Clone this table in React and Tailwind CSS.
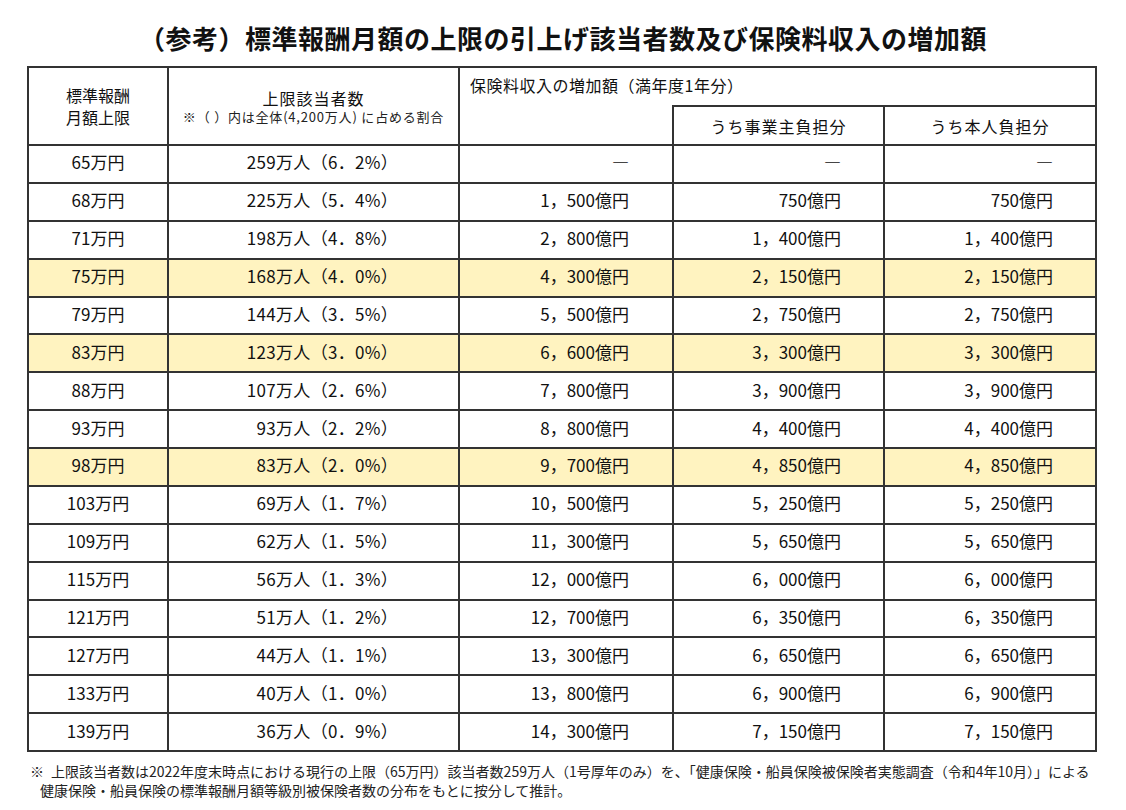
import React from 'react'

const ROWS = [
  ['65万円', '259万人（6．2%）', '―', '―', '―'],
  ['68万円', '225万人（5．4%）', '1，500億円', '750億円', '750億円'],
  ['71万円', '198万人（4．8%）', '2，800億円', '1，400億円', '1，400億円'],
  ['75万円', '168万人（4．0%）', '4，300億円', '2，150億円', '2，150億円', true],
  ['79万円', '144万人（3．5%）', '5，500億円', '2，750億円', '2，750億円'],
  ['83万円', '123万人（3．0%）', '6，600億円', '3，300億円', '3，300億円', true],
  ['88万円', '107万人（2．6%）', '7，800億円', '3，900億円', '3，900億円'],
  ['93万円', '93万人（2．2%）', '8，800億円', '4，400億円', '4，400億円'],
  ['98万円', '83万人（2．0%）', '9，700億円', '4，850億円', '4，850億円', true],
  ['103万円', '69万人（1．7%）', '10，500億円', '5，250億円', '5，250億円'],
  ['109万円', '62万人（1．5%）', '11，300億円', '5，650億円', '5，650億円'],
  ['115万円', '56万人（1．3%）', '12，000億円', '6，000億円', '6，000億円'],
  ['121万円', '51万人（1．2%）', '12，700億円', '6，350億円', '6，350億円'],
  ['127万円', '44万人（1．1%）', '13，300億円', '6，650億円', '6，650億円'],
  ['133万円', '40万人（1．0%）', '13，800億円', '6，900億円', '6，900億円'],
  ['139万円', '36万人（0．9%）', '14，300億円', '7，150億円', '7，150億円'],
]

const cell = 'border-2 border-[#333] p-0'

export default function App() {
  return (
    <div className="w-[1126px] h-[810px] bg-white text-[#111] font-['Noto_Sans_CJK_JP',sans-serif] pt-[22px]">
      {/* Title */}
      <h1 className="h-[32px] leading-[32px] text-center text-[26px] font-bold tracking-[0.5px]">
        （参考）標準報酬月額の上限の引上げ該当者数及び保険料収入の増加額
      </h1>

      <div className="mt-[12px] pl-[27px]">
        <table className="border-collapse table-fixed w-[1068px]">
          <colgroup>
            <col className="w-[140px]" />
            <col className="w-[291px]" />
            <col className="w-[214px]" />
            <col className="w-[211px]" />
            <col className="w-[212px]" />
          </colgroup>
          <thead>
            <tr className="h-[39px]">
              <th rowSpan={2} className={`${cell} font-normal text-[16px] leading-[22px] text-center`}>
                <div>標準報酬</div>
                <div>月額上限</div>
              </th>
              <th rowSpan={2} className={`${cell} font-normal text-center`}>
                <div className="text-[16px] leading-[22px] tracking-[1px]">上限該当者数</div>
                <div className="text-[13px] leading-[16px] tracking-[0.8px] text-[#222]">※（ ）内は全体(4,200万人) に占める割合</div>
              </th>
              <th colSpan={3} className={`${cell} border-b-0 font-normal text-left align-top`}>
                <div className="pl-[10px] pt-[6px] text-[16px] leading-[22px] tracking-[0.5px] whitespace-nowrap">
                  保険料収入の増加額（満年度1年分）
                </div>
              </th>
            </tr>
            <tr className="h-[39px]">
              <th className={`${cell} border-t-0`}></th>
              <th className={`${cell} font-normal text-[16px] tracking-[1px] text-center`}>うち事業主負担分</th>
              <th className={`${cell} font-normal text-[16px] tracking-[1px] text-center`}>うち本人負担分</th>
            </tr>
          </thead>
          <tbody className="text-[17px] leading-[20px]">
            {ROWS.map(([cap, people, total, employer, self, hl]) => (
              <tr key={cap} className={`h-[37.875px] ${hl ? 'bg-[#fff3c0]' : 'bg-white'}`}>
                <td className={`${cell} text-center pb-[3px]`}>{cap}</td>
                <td className={`${cell} text-right pr-[60px] pb-[3px] tracking-[0.3px]`}>{people}</td>
                <td className={`${cell} text-right pr-[43px] pb-[3px]`}>{total}</td>
                <td className={`${cell} text-right pr-[42px] pb-[3px]`}>{employer}</td>
                <td className={`${cell} text-right pr-[42px] pb-[3px]`}>{self}</td>
              </tr>
            ))}
          </tbody>
        </table>
      </div>

      {/* Footnote */}
      <div className="mt-[10px] text-[14px] leading-[19px] text-[#222] whitespace-nowrap">
        <div className="pl-[30px]">※&ensp;上限該当者数は2022年度末時点における現行の上限（65万円）該当者数259万人（1号厚年のみ）を、「健康保険・船員保険被保険者実態調査（令和4年10月）」による</div>
        <div className="pl-[40px]">健康保険・船員保険の標準報酬月額等級別被保険者数の分布をもとに按分して推計。</div>
      </div>
    </div>
  )
}
